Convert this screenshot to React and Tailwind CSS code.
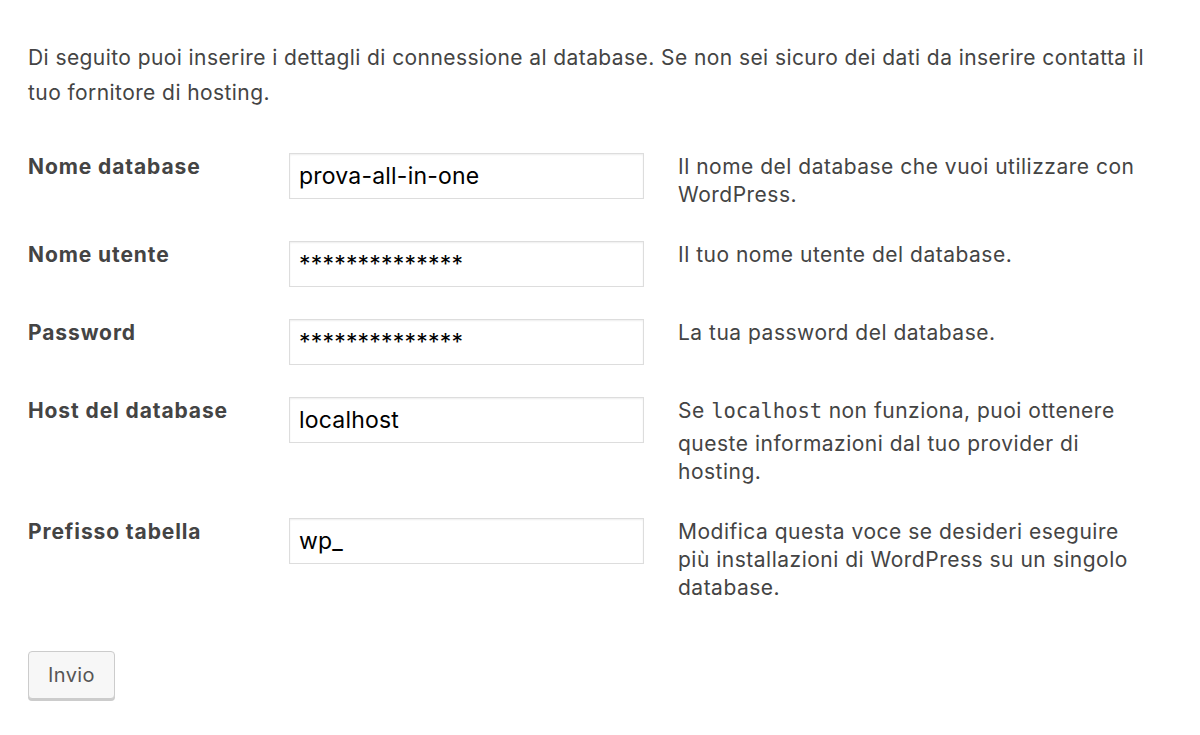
export default function App() {
  const rows = [
    {
      label: "Nome database",
      value: "prova-all-in-one",
      desc: "Il nome del database che vuoi utilizzare con WordPress.",
    },
    {
      label: "Nome utente",
      value: "**************",
      desc: "Il tuo nome utente del database.",
    },
    {
      label: "Password",
      value: "**************",
      desc: "La tua password del database.",
    },
    {
      label: "Host del database",
      value: "localhost",
      desc: (
        <>
          Se{" "}
          <code className="inline-block pb-[5px] font-['DejaVu_Sans_Mono',monospace] text-[20.5px] leading-[28px] tracking-normal">
            localhost
          </code>{" "}
          non funziona, puoi ottenere queste informazioni dal tuo provider di
          hosting.
        </>
      ),
    },
    {
      label: "Prefisso tabella",
      value: "wp_",
      desc: "Modifica questa voce se desideri eseguire più installazioni di WordPress su un singolo database.",
    },
  ];

  return (
    <div className="min-h-screen bg-white px-[28px] pt-[40px] font-['Inter',sans-serif] text-[#444]">
      {/* intro */}
      <p className="text-[21px] leading-[35px] tracking-[0.42px]">
        Di seguito puoi inserire i dettagli di connessione al database. Se non
        sei sicuro dei dati da inserire contatta il tuo fornitore di hosting.
      </p>

      {/* form table */}
      <div className="mt-[27px]">
        {rows.map((row) => (
          <div key={row.label} className="flex py-4">
            <div className="w-[261px] shrink-0 text-[21px] font-bold leading-[28px] tracking-[0.9px]">
              {row.label}
            </div>
            <div className="w-[389px] shrink-0">
              <input
                readOnly
                value={row.value}
                className="h-[46px] w-[355px] border border-[#ddd] bg-white px-[9px] font-['Inter',sans-serif] text-[23px] tracking-[0.2px] text-black shadow-[inset_0_1px_2px_rgba(0,0,0,0.07)] outline-none"
              />
            </div>
            <div className="w-[470px] text-[21px] leading-[28px] tracking-[0.5px]">
              {row.desc}
            </div>
          </div>
        ))}
      </div>

      {/* submit */}
      <button className="mt-[33px] h-[48px] w-[87px] rounded-[4px] border border-[#ccc] bg-[#f7f7f7] text-[20px] tracking-[0.4px] text-[#555] shadow-[0_2px_0_#ccc]">
        Invio
      </button>
    </div>
  );
}
